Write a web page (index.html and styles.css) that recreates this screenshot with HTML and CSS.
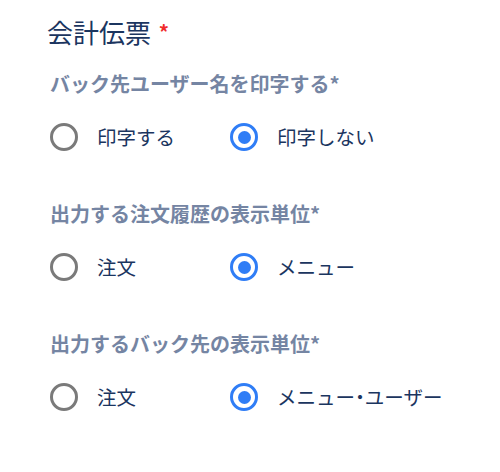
FILE: index.html
```html
<!DOCTYPE html>
<html lang="ja">
<head>
<meta charset="utf-8">
<link rel="stylesheet" href="styles.css">
</head>
<body>
<div class="panel">
  <h2 class="title">会計伝票 <span class="req">*</span></h2>
  <div class="group">
    <div class="label">バック先ユーザー名を印字する*</div>
    <div class="options">
      <label class="opt"><span class="radio"></span><span class="opt-text">印字する</span></label>
      <label class="opt"><span class="radio on"></span><span class="opt-text">印字しない</span></label>
    </div>
  </div>
  <div class="group">
    <div class="label">出力する注文履歴の表示単位*</div>
    <div class="options">
      <label class="opt"><span class="radio"></span><span class="opt-text">注文</span></label>
      <label class="opt"><span class="radio on"></span><span class="opt-text">メニュー</span></label>
    </div>
  </div>
  <div class="group">
    <div class="label">出力するバック先の表示単位*</div>
    <div class="options">
      <label class="opt"><span class="radio"></span><span class="opt-text">注文</span></label>
      <label class="opt"><span class="radio on"></span><span class="opt-text">メニュー<span class="dot">・</span>ユーザー</span></label>
    </div>
  </div>
</div>
</body>
</html>
```

FILE: styles.css
```css
html, body {
  margin: 0;
  padding: 0;
  background: #ffffff;
}
body {
  font-family: "Noto Sans CJK JP", "Noto Sans", sans-serif;
  width: 500px;
  height: 472px;
  overflow: hidden;
}
.panel {
  padding: 14px 0 0 47px;
  display: flex;
  flex-direction: column;
}
.title {
  margin: 0;
  font-size: 26px;
  line-height: 36px;
  font-weight: 400;
  color: #1b355f;
}
.req {
  color: #f02b2b;
  font-size: 20px;
  font-weight: 700;
  vertical-align: 3px;
  margin-left: 2px;
}
.group {
  display: flex;
  flex-direction: column;
  margin-top: 20px;
}
.group + .group {
  margin-top: 43px;
}
.label {
  font-size: 20px;
  line-height: 28px;
  font-weight: 700;
  color: #7585a3;
  padding-left: 3px;
}
.options {
  display: grid;
  grid-template-columns: 180px auto;
  margin-top: 19px;
  padding-left: 3px;
}
.opt {
  display: flex;
  align-items: center;
  height: 40px;
  gap: 19px;
}
.radio {
  box-sizing: border-box;
  width: 28px;
  height: 28px;
  border-radius: 50%;
  border: 3px solid #7a7a7a;
  display: flex;
  align-items: center;
  justify-content: center;
  flex: none;
}
.radio.on {
  border-color: #2f7df6;
}
.radio.on::after {
  content: "";
  width: 13px;
  height: 13px;
  border-radius: 50%;
  background: #2f7df6;
}
.opt-text {
  font-size: 19.5px;
  line-height: 28px;
  color: #1b355f;
}
.dot {
  font-feature-settings: "halt";
}
```
